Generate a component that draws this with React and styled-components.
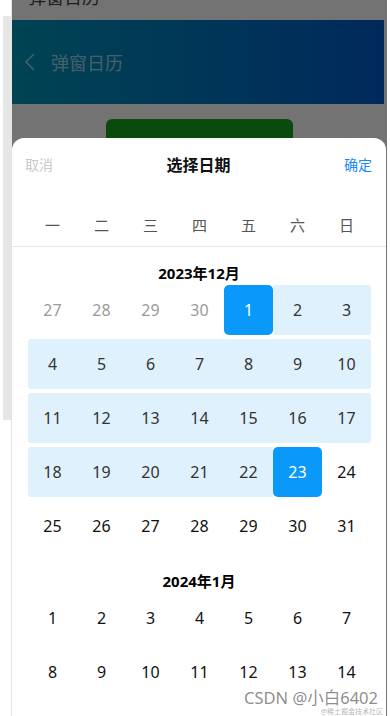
import React from 'react';
import styled, { createGlobalStyle } from 'styled-components';

const GlobalStyle = createGlobalStyle`
    html, body {
        margin: 0;
        padding: 0;
        background: #fff;
    }
    body {
        font-family: "Noto Sans", "Noto Sans CJK SC", sans-serif;
    }
`

const weekDays = ['一', '二', '三', '四', '五', '六', '日'];

// 周一为第一天
function buildMonth(year, month) {
    const first = new Date(year, month - 1, 1);
    const lead = (first.getDay() + 6) % 7;
    const total = new Date(year, month, 0).getDate();
    const prevTotal = new Date(year, month - 1, 0).getDate();
    const days = [];
    for (let i = lead; i > 0; i--) {
        days.push({ day: prevTotal - i + 1, outside: true });
    }
    for (let d = 1; d <= total; d++) {
        days.push({ day: d, outside: false });
    }
    return days;
}

const months = [
    { year: 2023, month: 12, range: [1, 23] },
    { year: 2024, month: 1, range: null },
];

function dayState(item, range) {
    if (item.outside || !range) return 'none';
    if (item.day === range[0] || item.day === range[1]) return 'edge';
    if (item.day > range[0] && item.day < range[1]) return 'middle';
    return 'none';
}

function App() {
    return(
        <>
        <GlobalStyle/>
        <Frame>
            <Rail>
                <Thumb/>
            </Rail>
            <Screen>
                <PageTitle>弹窗日历</PageTitle>
                <NavBar>
                    <BackIcon width='12' height='20' viewBox='0 0 12 20'>
                        <path d='M10 2 L2 10 L10 18' fill='none' stroke='currentColor' strokeWidth='1.6'/>
                    </BackIcon>
                    <NavTitle>弹窗日历</NavTitle>
                </NavBar>
                <ActionArea>
                    <OpenButton>打开日历</OpenButton>
                </ActionArea>

                <Mask/>

                <Sheet>
                    <SheetHeader>
                        <HeaderAction>取消</HeaderAction>
                        <SheetTitle>选择日期</SheetTitle>
                        <HeaderAction confirm>确定</HeaderAction>
                    </SheetHeader>
                    <WeekRow>
                        {weekDays.map(w => <WeekDay key={w}>{w}</WeekDay>)}
                    </WeekRow>
                    <MonthList>
                        {months.map(m => (
                            <Month key={`${m.year}-${m.month}`}>
                                <MonthTitle>{m.year}年{m.month}月</MonthTitle>
                                <DayGrid>
                                    {buildMonth(m.year, m.month).map((item, i) => (
                                        <Day
                                            key={i}
                                            state={dayState(item, m.range)}
                                            outside={item.outside}
                                            col={i % 7}
                                        >
                                            {item.day}
                                        </Day>
                                    ))}
                                </DayGrid>
                            </Month>
                        ))}
                    </MonthList>
                </Sheet>

                <Watermark>
                    <span>CSDN @小白6402</span>
                    <small>@稀土掘金技术社区</small>
                </Watermark>
            </Screen>
            <Edge/>
        </Frame>
        </>
    )
}

export default App;

const Frame = styled.div`
    display: flex;
    width: 390px;
    height: 716px;
    overflow: hidden;
    background: #fff;
`

const Rail = styled.div`
    width: 11px;
    flex-shrink: 0;
    padding-top: 16px;
    border-right: solid 1px #e4e4e4;
    box-sizing: content-box;
`

const Thumb = styled.div`
    margin-left: 3px;
    width: 8px;
    height: 404px;
    background: #e6e6e6;
`

const Edge = styled.div`
    width: 2px;
    flex-shrink: 0;
    background: #fff;
`

const Screen = styled.div`
    position: relative;
    width: 375px;
    height: 716px;
    overflow: hidden;
    background: #fff;
    display: flex;
    flex-direction: column;
`

const PageTitle = styled.div`
    height: 34px;
    margin-top: -14px;
    padding-left: 16px;
    font-family: "Noto Sans CJK SC", sans-serif;
    font-size: 18px;
    line-height: 20px;
    color: #444;
    flex-shrink: 0;
`

const NavBar = styled.div`
    height: 84px;
    margin-right: 3px;
    display: flex;
    align-items: center;
    padding-left: 12px;
    gap: 15px;
    background: linear-gradient(to right, #0096b8, #005ccc);
    flex-shrink: 0;
`

const BackIcon = styled.svg`
    color: rgba(255, 255, 255, 0.6);
`

const NavTitle = styled.span`
    font-family: "Noto Sans CJK SC", sans-serif;
    font-size: 18px;
    color: rgba(255, 255, 255, 0.65);
`

const ActionArea = styled.div`
    display: flex;
    justify-content: center;
    padding-top: 15px;
`

const OpenButton = styled.button`
    width: 187px;
    height: 44px;
    border: none;
    border-radius: 6px;
    background: #18a421;
    color: #fff;
    font-family: "Noto Sans CJK SC", sans-serif;
    font-size: 16px;
    padding-top: 10px;
`

const Mask = styled.div`
    position: absolute;
    inset: 0;
    background: rgba(0, 0, 0, 0.55);
`

const Sheet = styled.div`
    position: absolute;
    top: 138px;
    left: 0;
    right: 1px;
    bottom: 0;
    background: #fff;
    border-radius: 12px 12px 0 0;
    display: flex;
    flex-direction: column;
    overflow: hidden;
`

const SheetHeader = styled.div`
    height: 52px;
    display: flex;
    align-items: center;
    justify-content: space-between;
    padding: 0 14px 0 13px;
    flex-shrink: 0;
`

const HeaderAction = styled.span`
    width: 40px;
    text-align: ${p => p.confirm ? 'right' : 'left'};
    font-family: "Noto Sans CJK SC", sans-serif;
    font-size: 14px;
    color: ${p => p.confirm ? '#1989fa' : '#c8c9cc'};
`

const SheetTitle = styled.span`
    font-family: "Noto Sans CJK SC", sans-serif;
    font-size: 16px;
    font-weight: 700;
    color: #111;
`

const WeekRow = styled.div`
    display: grid;
    grid-template-columns: repeat(7, 49px);
    height: 44px;
    margin-top: 12px;
    padding: 0 16px;
    align-items: center;
    border-bottom: solid 1px #e8e8e8;
    flex-shrink: 0;
`

const WeekDay = styled.span`
    text-align: center;
    font-family: "Noto Sans CJK SC", sans-serif;
    font-size: 15px;
    color: #555;
`

const MonthList = styled.div`
    flex: 1;
    overflow: hidden;
`

const Month = styled.div`
    padding: 14px 16px 0;
`

const MonthTitle = styled.div`
    height: 24px;
    line-height: 24px;
    text-align: center;
    font-size: 15px;
    font-weight: 700;
    color: #000;
`

const DayGrid = styled.div`
    display: grid;
    grid-template-columns: repeat(7, 49px);
    grid-auto-rows: 50px;
    row-gap: 4px;
    padding-bottom: 4px;
`

const Day = styled.div`
    display: flex;
    align-items: center;
    justify-content: center;
    font-size: 16px;
    color: ${p => p.state === 'edge' ? '#fff' : p.outside ? '#9a9a9a' : p.state === 'middle' ? '#333' : '#111'};
    background: ${p => p.state === 'edge' ? '#0a99f8' : p.state === 'middle' ? '#dff1fd' : 'transparent'};
    border-radius: ${p => p.state === 'edge'
        ? '5px'
        : p.state === 'middle' && p.col === 0
            ? '3px 0 0 3px'
            : p.state === 'middle' && p.col === 6
                ? '0 3px 3px 0'
                : '0'};
`

const Watermark = styled.div`
    position: absolute;
    right: 4px;
    bottom: 1px;
    display: flex;
    flex-direction: column;
    align-items: flex-end;
    line-height: 1;
    color: rgba(120, 120, 120, 0.85);
    font-family: "Noto Sans", "Noto Sans CJK SC", sans-serif;

    span {
        font-size: 16.5px;
        margin-right: 5px;
    }

    small {
        font-size: 7px;
        margin-top: 2px;
        color: rgba(150, 150, 150, 0.7);
    }
`
